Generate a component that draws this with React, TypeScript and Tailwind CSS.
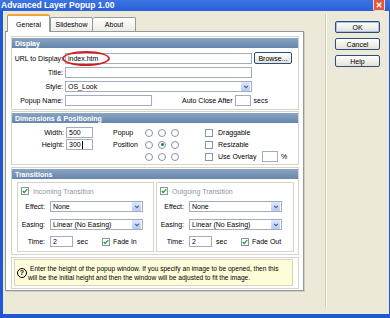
import React from 'react';

const font = "font-['Liberation_Sans',Arial,sans-serif]";

function TextBox({ value = '', w, caret }: { value?: string; w: string; caret?: boolean }) {
  return (
    <div className={`flex h-[11px] shrink-0 items-center border border-[#a3acba] bg-white px-[2px] ${w}`}>
      <span>{value}</span>
      {caret && <span className="ml-px h-[8px] w-px bg-black" />}
    </div>
  );
}

function Select({ value, w }: { value: string; w: string }) {
  return (
    <div className={`flex h-[11px] shrink-0 items-center justify-between border border-[#a3acba] bg-white pl-[2px] pr-px ${w}`}>
      <span>{value}</span>
      <span className="flex h-[9px] w-[9px] items-center justify-center rounded-[1px] bg-linear-to-b from-[#dce7fd] to-[#b6cbf4]">
        <svg viewBox="0 0 8 8" className="h-[6px] w-[6px]">
          <path d="M1.5 2.5 L4 5 L6.5 2.5" fill="none" stroke="#4d6185" strokeWidth="1.6" />
        </svg>
      </span>
    </div>
  );
}

function Header({ children }: { children: React.ReactNode }) {
  return (
    <div className="flex h-[10px] items-center bg-linear-to-b from-[#8aa5c4] to-[#6786ab] pl-[3px] font-bold text-white">
      {children}
    </div>
  );
}

function Check({ on }: { on?: boolean }) {
  return (
    <span className="flex h-[8px] w-[8px] shrink-0 items-center justify-center border border-[#8596ab] bg-white">
      {on && (
        <svg viewBox="0 0 8 8" className="h-[6px] w-[6px]">
          <path d="M1 4 L3 6 L7 1.5" fill="none" stroke="#21a121" strokeWidth="1.7" />
        </svg>
      )}
    </span>
  );
}

function Radio({ on }: { on?: boolean }) {
  return (
    <span className="flex h-[8px] w-[8px] items-center justify-center rounded-full border border-[#8394aa] bg-white">
      {on && <span className="h-[3px] w-[3px] rounded-full bg-[#2f7f2f]" />}
    </span>
  );
}

function XPButton({ label, w, def }: { label: string; w: string; def?: boolean }) {
  return (
    <div
      className={`flex h-[12px] shrink-0 items-center justify-center rounded-[2px] border border-[#2a4f7c] bg-linear-to-b from-white to-[#e4e1d6] ${w} ${
        def ? 'shadow-[inset_0_0_0_1px_#a6bfeb]' : ''
      }`}
    >
      {label}
    </div>
  );
}

function Transition({ title, fade, w }: { title: string; fade: string; w: string }) {
  return (
    <div className={`flex h-[70px] flex-col border border-[#d6d3c9] ${w}`}>
      <div className="mt-[4px] flex h-[8px] items-center gap-[4px] pl-[3px]">
        <Check on />
        <span className="text-[#8b95a3]">{title}</span>
      </div>
      <div className="mt-[6px] flex items-center gap-[5px]">
        <span className="w-[27px] text-right">Effect:</span>
        <Select value="None" w="w-[93px]" />
      </div>
      <div className="mt-[7px] flex items-center gap-[5px]">
        <span className="w-[27px] text-right">Easing:</span>
        <Select value="Linear (No Easing)" w="w-[93px]" />
      </div>
      <div className="mt-[6px] flex items-center">
        <span className="w-[27px] text-right">Time:</span>
        <TextBox value="2" w="ml-[5px] w-[23px]" />
        <span className="ml-[4px] w-[25px]">sec</span>
        <Check on />
        <span className="ml-[3px]">{fade}</span>
      </div>
    </div>
  );
}

export default function App() {
  return (
    <div className={`flex h-[318px] w-[390px] flex-col overflow-hidden bg-[#2157d2] text-[7px] leading-none text-black ${font}`}>
      {/* Title bar */}
      <div className="flex h-[11px] shrink-0 items-center justify-between bg-linear-to-b from-[#3d74e2] to-[#2a60d8] pl-[1px] pr-[5px]">
        <span className="text-[8.5px] font-bold leading-[11px] text-white">Advanced Layer Popup 1.00</span>
        <div className="flex h-[11px] w-[12px] items-center justify-center rounded-b-[2px] border border-t-0 border-[#f3d2c8] bg-[#df5a3c]">
          <svg viewBox="0 0 8 8" className="h-[6px] w-[6px]">
            <path d="M1 1 L7 7 M7 1 L1 7" stroke="white" strokeWidth="1.8" />
          </svg>
        </div>
      </div>

      <div className="mb-[4px] ml-[3px] mr-px flex flex-1 bg-[#ECE9D8]">
        {/* Tabs + panel */}
        <div className="flex w-[301px] shrink-0 flex-col pl-[2px] pt-[3px]">
          <div className="flex h-[17px] items-end pl-[2px]">
            <div className="relative z-10 -mb-px flex h-[18px] w-[43px] items-center justify-center rounded-t-[2px] border-x border-t-2 border-x-[#919b9c] border-t-[#f0a53a] bg-white">
              General
            </div>
            <div className="flex h-[14px] w-[43px] items-center justify-center rounded-t-[2px] border-x border-t border-[#919b9c] bg-linear-to-b from-white to-[#ecebe4]">
              Slideshow
            </div>
            <div className="flex h-[14px] w-[43px] items-center justify-center rounded-t-[2px] border-r border-t border-[#919b9c] bg-linear-to-b from-white to-[#ecebe4]">
              About
            </div>
          </div>

          <div className="flex h-[260px] flex-col border border-[#919b9c] bg-white px-[5px] pt-[4px] shadow-[1px_1px_0_#d0cdc0]">
            {/* Display */}
            <div className="w-[288px] border border-[#d6d3c9] pb-[3px] pt-px">
              <Header>Display</Header>
              <div className="mt-[4px] flex flex-col gap-[3px]">
                <div className="flex items-center gap-[2px]">
                  <span className="w-[51px] text-right">URL to Display:</span>
                  <div className="relative">
                    <TextBox value="index.htm" w="w-[187px]" />
                    <div className="absolute -left-[3px] -top-[2px] h-[15px] w-[48px] rounded-[50%] border-2 border-[#d42020]" />
                  </div>
                  <XPButton label="Browse..." w="w-[38px]" />
                </div>
                <div className="flex items-center gap-[2px]">
                  <span className="w-[51px] text-right">Title:</span>
                  <TextBox w="w-[187px]" />
                </div>
                <div className="flex items-center gap-[2px]">
                  <span className="w-[51px] text-right">Style:</span>
                  <Select value="OS_Look" w="w-[187px]" />
                </div>
                <div className="flex items-center">
                  <span className="w-[51px] text-right">Popup Name:</span>
                  <TextBox w="ml-[2px] w-[87px]" />
                  <span className="ml-[30px]">Auto Close After</span>
                  <TextBox w="ml-[2px] w-[16px]" />
                  <span className="ml-[3px]">secs</span>
                </div>
              </div>
            </div>

            {/* Dimensions & Positioning */}
            <div className="mt-px w-[288px] border border-[#d6d3c9] pb-[2px] pt-px">
              <Header>Dimensions &amp; Positioning</Header>
              <div className="mt-[4px] flex">
                <div className="flex flex-col gap-px">
                  <div className="flex h-[11px] items-center gap-[2px]">
                    <span className="w-[52px] text-right">Width:</span>
                    <TextBox value="500" w="w-[27px]" />
                  </div>
                  <div className="flex h-[11px] items-center gap-[2px]">
                    <span className="w-[52px] text-right">Height:</span>
                    <TextBox value="300" caret w="w-[27px]" />
                  </div>
                </div>
                <div className="ml-[20px] grid grid-cols-[27px_8px_8px_8px] grid-rows-[11px_11px_11px] items-center gap-x-[5px] gap-y-px">
                  <span>Popup</span>
                  <Radio />
                  <Radio />
                  <Radio />
                  <span>Position</span>
                  <Radio />
                  <Radio on />
                  <Radio />
                  <span />
                  <Radio />
                  <Radio />
                  <Radio />
                </div>
                <div className="ml-[26px] flex flex-col gap-px">
                  <div className="flex h-[11px] items-center gap-[5px]">
                    <Check />
                    <span>Draggable</span>
                  </div>
                  <div className="flex h-[11px] items-center gap-[5px]">
                    <Check />
                    <span>Resizable</span>
                  </div>
                  <div className="flex h-[11px] items-center">
                    <Check />
                    <span className="ml-[5px] w-[44px]">Use Overlay</span>
                    <TextBox w="w-[16px] h-[10px]" />
                    <span className="ml-[3px]">%</span>
                  </div>
                </div>
              </div>
            </div>

            {/* Transitions */}
            <div className="mt-[2px] w-[288px] border border-[#d6d3c9] pb-[2px] pt-px">
              <Header>Transitions</Header>
              <div className="mt-[3px] flex gap-[2px] pl-[5px]">
                <Transition title="Incoming Transition" fade="Fade In" w="w-[137px]" />
                <Transition title="Outgoing Transition" fade="Fade Out" w="w-[138px]" />
              </div>
            </div>

            {/* Help */}
            <div className="mt-[2px] w-[288px] border border-[#d6d3c9] px-[2px] pb-[2px] pt-px">
              <div className="flex h-[27px] w-[279px] items-center overflow-hidden border border-[#d8d6b8] bg-[#fdfdda] pl-[2px]">
                <span className="flex h-[10px] w-[10px] shrink-0 items-center justify-center rounded-full border border-black text-[7px] font-bold">
                  ?
                </span>
                <div className="ml-[1px] flex flex-col gap-[2px] whitespace-nowrap text-[6.6px] leading-[7px]">
                  <span className="pl-[2px]">
                    Enter the height of the popup window. If you specify an image to be opened, then this
                  </span>
                  <span>will be the initial height and then the window will be adjusted to fit the image.</span>
                </div>
              </div>
            </div>
          </div>
        </div>

        {/* Separator + buttons */}
        <div className="mb-[7px] ml-[21px] mt-[3px] w-px bg-[#d0ccbd] shadow-[1px_0_0_#fbfaf6]" />
        <div className="ml-[9px] flex flex-col gap-[5px] pt-[10px]">
          <XPButton label="OK" w="w-[45px]" def />
          <XPButton label="Cancel" w="w-[45px]" />
          <XPButton label="Help" w="w-[45px]" />
        </div>
      </div>
    </div>
  );
}
